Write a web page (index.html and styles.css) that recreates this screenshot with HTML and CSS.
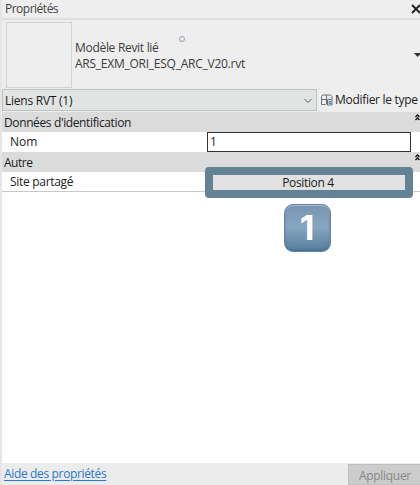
FILE: index.html
```html
<!DOCTYPE html>
<html lang="fr">
<head>
<meta charset="utf-8">
<title>Propriétés</title>
<link rel="stylesheet" href="styles.css">
</head>
<body>
<main class="panel">
  <header class="title"><span class="t-title">Propriétés</span>
    <svg class="close" width="10" height="10" viewBox="0 0 10 10"><path d="M1 1l8 8M9 1L1 9" stroke="#252525" stroke-width="2" fill="none"/></svg>
  </header>
  <section class="family">
    <div class="thumb"></div>
    <div class="family-name"><div class="t-model">Modèle Revit lié</div><div class="t-file">ARS_EXM_ORI_ESQ_ARC_V20.rvt</div></div>
    <i class="busy"></i>
    <svg class="arrow" width="7" height="4" viewBox="0 0 7 4"><path d="M0 0h7L3.5 4z" fill="#303030"/></svg>
  </section>
  <div class="selector">
    <div class="combo"><span class="t-liens">Liens RVT (1)</span>
      <svg width="8" height="6" viewBox="0 0 8 6"><path d="M.5 1L4 4.500 7.500 1" stroke="#555" fill="none"/></svg>
    </div>
    <div class="edit">
      <svg width="12" height="12" viewBox="0 0 12 12" fill="none" stroke="#68727c"><path d="M.5 5V2.500l1-1.500h4v4.500h-5v5h4M5.500 1h4l1.500 1.500V5M.5 5.500h5v5"/><path d="M6.500 5.500h4.500v5.500H6.500z" fill="#dce8f2"/><path d="M8 7.500h2v2H8z" stroke="#4c86bb"/></svg>
      <span class="t-edit">Modifier le type</span>
    </div>
  </div>
  <div class="group"><span class="t-data">Données d'identification</span>
    <svg class="fold" width="5" height="7" viewBox="0 0 5 7"><path d="M.5 3l2-2 2 2M.5 6l2-2 2 2" stroke="#111" stroke-width="1.300" fill="none"/></svg>
  </div>
  <div class="row"><span class="label t-nom">Nom</span><div class="field">1</div></div>
  <div class="group"><span class="t-autre">Autre</span>
    <svg class="fold" width="5" height="7" viewBox="0 0 5 7"><path d="M.5 3l2-2 2 2M.5 6l2-2 2 2" stroke="#111" stroke-width="1.300" fill="none"/></svg>
  </div>
  <div class="row last"><span class="label t-site">Site partagé</span><div class="highlight"><span class="t-pos">Position 4</span></div></div>
  <div class="content"><div class="badge">1</div></div>
  <footer class="footer"><a class="t-help">Aide des propriétés</a><div class="apply"><span class="t-apply">Appliquer</span></div></footer>
</main>
</body>
</html>
```
FILE: styles.css
```css
* { box-sizing: border-box; }
body { margin: 0; overflow: hidden; background: #eee; font: 12px/16px "Open Sans", "Noto Sans", sans-serif; color: #1c1c1c; }
span, a, .t-model, .t-file { white-space: nowrap; }
.panel { width: 420px; height: 485px; border-left: 2px solid #e5e5e5; display: flex; flex-direction: column; }
.title { height: 20px; flex: none; border-bottom: 2px solid #dedede; display: flex; justify-content: space-between; padding: 1px 0 0 3px; color: #444; }
.close { margin: 3px -1px 0 0; flex: none; }
.family { height: 69px; flex: none; display: flex; position: relative; padding: 2px 0 0 4px; color: #3c3c3c; }
.thumb { width: 66px; height: 66px; border: 1px solid #d1d3d5; }
.family-name { margin: 18px 0 0 3px; }
.busy { position: absolute; left: 177px; top: 16px; width: 6px; height: 6px; border: 1px solid #9c9cb4; border-radius: 50%; }
.arrow { position: absolute; left: 412px; top: 33px; }
.selector { height: 23px; flex: none; display: flex; }
.combo { width: 315px; height: 22px; background: #e1e4e3; border: 1px solid #bec3c2; display: flex; align-items: center; justify-content: space-between; padding: 1px 4px 0 2px; }
.edit { display: flex; align-items: center; padding-left: 4px; gap: 2px; height: 22px; }
.group { height: 20px; flex: none; background: #dbdbdb; display: flex; justify-content: space-between; padding: 3px 0 0 2px; }
.fold { margin-top: -1px; }
.row { height: 20px; flex: none; background: #fff; display: flex; }
.label { width: 205px; padding: 2px 0 0 8px; }
.field { width: 204px; height: 20px; border: 1px solid #333; padding: 1px 2px; }
.last { border-bottom: 1px solid #c8c8c8; position: relative; }
.highlight { position: absolute; left: 203px; top: -5px; width: 208px; height: 31px; border: 8px solid #648296; border-radius: 4px; background: #e1e1e1; display: flex; align-items: center; justify-content: center; }
.highlight span { margin-right: 2px; }
.content { flex: 1; background: #fff; padding: 12px 0 0 282px; }
.badge { width: 47px; height: 48px; border-radius: 9px; border: 1px solid #6a83a2; background: linear-gradient(#7894b2, #87a6c0 48%, #557d9e); box-shadow: inset 0 1px 1px #abc3dc, inset 0 -1px 2px #416b8e; color: #fff; font: bold 34px/46px "Inter", sans-serif; text-align: center; padding-right: 1px; }
.footer { height: 22px; flex: none; background: #ececec; display: flex; justify-content: space-between; padding-left: 2px; }
.footer a { height: 16px; line-height: 16px; margin-top: 3px; color: #2878ce; text-decoration: underline; text-underline-offset: 2px; }
.apply { width: 72px; height: 21px; margin-top: 1px; border: 1px solid #bfbfbf; border-right: 0; background: #ccc; color: #888; padding: 3px 0 0 10px; }
.t-title { letter-spacing: -.5px; }
.t-model { letter-spacing: -.3px; }
.t-file { letter-spacing: -.25px; }
.t-liens { letter-spacing: -.25px; }
.t-edit { letter-spacing: -.3px; }
.t-data { letter-spacing: -.38px; }
.t-autre { letter-spacing: -.5px; }
.t-site { letter-spacing: -.3px; }
.t-pos { letter-spacing: -.35px; }
.t-help { letter-spacing: -.35px; }
.t-apply { letter-spacing: -.3px; }
```
